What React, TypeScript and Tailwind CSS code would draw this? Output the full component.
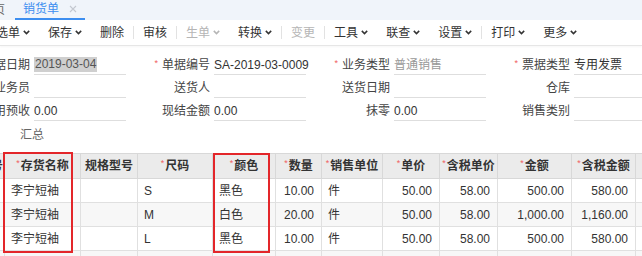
import React from 'react';

const font = { fontFamily: '"Liberation Sans", "Noto Sans CJK SC", sans-serif' };

const Chevron: React.FC<{ muted?: boolean }> = ({ muted }) => (
    <svg width="7" height="5" viewBox="0 0 7 5" className="ml-[3px]">
        <path d="M0.8 0.9 L3.5 3.6 L6.2 0.9" fill="none" stroke={muted ? '#b5b5b5' : '#333'} strokeWidth="1.5" />
    </svg>
);

type ToolItem = { label: string; menu?: boolean; muted?: boolean; sep?: boolean };

const tools: ToolItem[] = [
    { label: '选单', menu: true },
    { label: '保存', menu: true },
    { label: '删除' },
    { label: '|', sep: true },
    { label: '审核' },
    { label: '|', sep: true },
    { label: '生单', menu: true, muted: true },
    { label: '转换', menu: true },
    { label: '|', sep: true },
    { label: '变更', muted: true },
    { label: '|', sep: true },
    { label: '工具', menu: true },
    { label: '联查', menu: true },
    { label: '设置', menu: true },
    { label: '|', sep: true },
    { label: '打印', menu: true },
    { label: '更多', menu: true },
];

type Field = { label: string; value?: string; required?: boolean; muted?: boolean; selected?: boolean };

const formRows: Field[][] = [
    [
        { label: '单据日期', value: '2019-03-04', selected: true },
        { label: '单据编号', value: 'SA-2019-03-0009', required: true },
        { label: '业务类型', value: '普通销售', required: true, muted: true },
        { label: '票据类型', value: '专用发票', required: true },
    ],
    [{ label: '业务员' }, { label: '送货人' }, { label: '送货日期' }, { label: '仓库' }],
    [
        { label: '使用预收', value: '0.00' },
        { label: '现结金额', value: '0.00' },
        { label: '抹零', value: '0.00' },
        { label: '销售类别' },
    ],
];

type Col = { title: string; width: number; required?: boolean; align: 'left' | 'right' };

const cols: Col[] = [
    { title: '行号', width: 30, align: 'left' },
    { title: '存货名称', width: 76, required: true, align: 'left' },
    { title: '规格型号', width: 57, align: 'left' },
    { title: '尺码', width: 75, required: true, align: 'left' },
    { title: '颜色', width: 63, required: true, align: 'left' },
    { title: '数量', width: 46, required: true, align: 'right' },
    { title: '销售单位', width: 61, required: true, align: 'left' },
    { title: '单价', width: 57, required: true, align: 'right' },
    { title: '含税单价', width: 58, required: true, align: 'right' },
    { title: '金额', width: 74, required: true, align: 'right' },
    { title: '含税金额', width: 64, required: true, align: 'right' },
    { title: '税率', width: 60, required: true, align: 'right' },
];

const rows: string[][] = [
    ['1', '李宁短袖', '', 'S', '黑色', '10.00', '件', '50.00', '58.00', '500.00', '580.00', ''],
    ['2', '李宁短袖', '', 'M', '白色', '20.00', '件', '50.00', '58.00', '1,000.00', '1,160.00', ''],
    ['3', '李宁短袖', '', 'L', '黑色', '10.00', '件', '50.00', '58.00', '500.00', '580.00', ''],
    ['4', '', '', '', '', '', '', '', '', '', '', ''],
];

const App: React.FC = () => {
    return (
        <div className="w-[642px] h-[256px] overflow-hidden bg-white text-[12px] text-[#333]" style={font}>
            {/* Tab bar */}
            <div className="h-[20px] bg-[#f0f4fa] flex items-end">
                <span className="-ml-[7px] mb-[3px] leading-[14px] text-[#666]">页</span>
                <div className="ml-[10px] h-[20px] px-[8px] flex items-center border-b-2 border-[#3d8ef0]">
                    <span className="text-[#3d8ef0] leading-[14px]">销货单</span>
                    <svg width="8" height="8" viewBox="0 0 8 8" className="ml-[10px]">
                        <path d="M1 1 L7 7 M7 1 L1 7" stroke="#c4c8d0" strokeWidth="1.1" />
                    </svg>
                </div>
            </div>

            {/* Toolbar */}
            <div className="h-[26px] flex items-center border-b border-[#e6e6e6] shadow-[0_1px_2px_rgba(0,0,0,0.04)]">
                <div className="flex items-center -ml-[13px]">
                    {tools.map((t, i) =>
                        t.sep ? (
                            <span key={i} className="w-px h-[13px] bg-[#e2e2e2]" />
                        ) : (
                            <span
                                key={i}
                                className={`flex items-center px-[9px] leading-[14px] ${t.muted ? 'text-[#b5b5b5]' : 'text-[#333]'}`}
                            >
                                {t.label}
                                {t.menu && <Chevron muted={t.muted} />}
                            </span>
                        )
                    )}
                </div>
            </div>

            {/* Form */}
            <div className="pt-[9px] flex flex-col gap-[3px] -ml-[27px]">
                {formRows.map((r, ri) => (
                    <div key={ri} className="flex">
                        {r.map((f, fi) => (
                            <div key={fi} className="w-[180px] shrink-0 flex items-center">
                                <div className="w-[57px] flex justify-end items-center text-[#444] whitespace-nowrap">
                                    {f.required && <span className="text-[#f06060] text-[9px] mr-[4px] -mt-[2px]">*</span>}
                                    {f.label}
                                </div>
                                <div
                                    className={`ml-[4px] w-[92px] h-[20px] border-b border-[#dedede] flex items-center whitespace-nowrap ${
                                        f.muted ? 'text-[#999]' : 'text-[#333]'
                                    }`}
                                >
                                    {f.selected ? <span className="bg-[#cfcfcf] text-[#555] px-px leading-[15px]">{f.value}</span> : f.value}
                                </div>
                            </div>
                        ))}
                    </div>
                ))}
            </div>

            <div className="mt-[7px] ml-[20px] h-[14px] leading-[14px] text-[#666]">汇总</div>

            {/* Grid */}
            <div className="relative mt-[11px]">
                <table className="table-fixed border-collapse -ml-[26px]" style={{ width: cols.reduce((a, c) => a + c.width, 0) }}>
                    <colgroup>
                        {cols.map((c, i) => (
                            <col key={i} style={{ width: c.width }} />
                        ))}
                    </colgroup>
                    <thead>
                        <tr className="h-[25px] bg-[#ebebeb]">
                            {cols.map((c, i) => (
                                <th
                                    key={i}
                                    className={`border border-[#d8d8d8] font-bold text-[#333] whitespace-nowrap overflow-hidden p-0 ${
                                        i === 0 ? 'text-right pr-[1px]' : 'text-center'
                                    }`}
                                >
                                    {c.required && <span className="text-[#f06060] text-[9px] font-normal align-top mr-px">*</span>}
                                    {c.title}
                                </th>
                            ))}
                        </tr>
                    </thead>
                    <tbody>
                        {rows.map((r, ri) => (
                            <tr key={ri} className={`h-[24px] ${ri % 2 === 1 ? 'bg-[#f7f7f7]' : 'bg-white'}`}>
                                {r.map((v, ci) => (
                                    <td
                                        key={ci}
                                        className={`border border-[#e0e0e0] whitespace-nowrap overflow-hidden p-0 ${
                                            cols[ci].align === 'right' ? 'text-right pr-[7px]' : 'text-left pl-[6px]'
                                        } ${ci === 0 ? 'text-transparent' : ''}`}
                                    >
                                        {v}
                                    </td>
                                ))}
                            </tr>
                        ))}
                    </tbody>
                </table>
                {/* annotation boxes */}
                <div className="absolute left-[3px] top-[-1px] w-[70px] h-[101px] border-2 border-[#e3262a]" />
                <div className="absolute left-[213px] top-0 w-[57px] h-[100px] border-2 border-[#e3262a]" />
            </div>
        </div>
    );
};

export default App;
